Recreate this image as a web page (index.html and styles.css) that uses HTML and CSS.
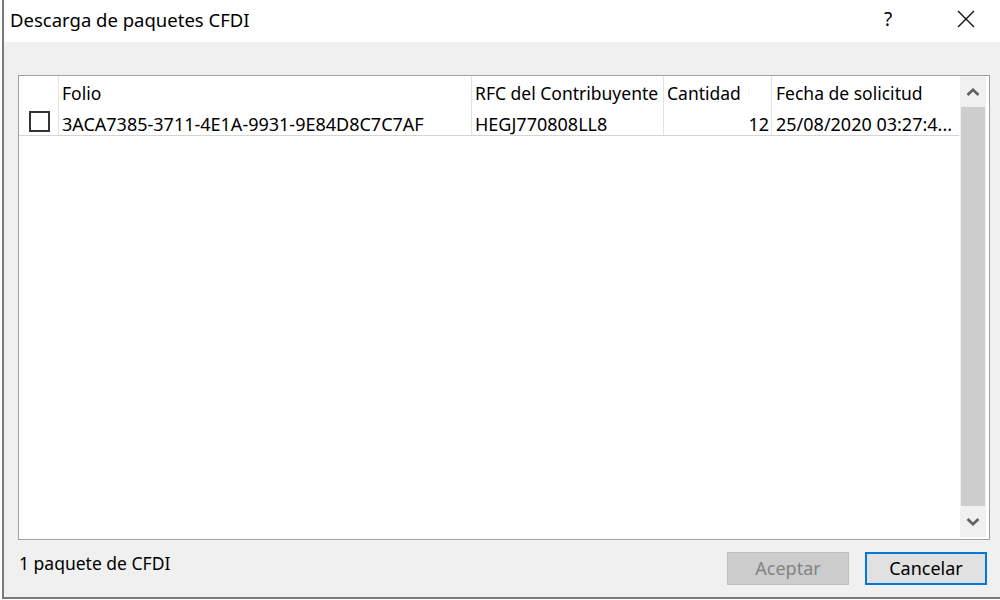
FILE: index.html
```html
<!DOCTYPE html>
<html lang="es">
<head>
<meta charset="utf-8">
<title>Descarga de paquetes CFDI</title>
<link rel="stylesheet" href="styles.css">
</head>
<body>
<div class="window">
  <div class="titlebar">
    <div class="title">Descarga de paquetes CFDI</div>
    <div class="help">?</div>
    <div class="close">
      <svg width="18" height="18" viewBox="0 0 18 18"><path d="M1 1 L17 17 M17 1 L1 17" stroke="#111" stroke-width="1.4" fill="none"/></svg>
    </div>
  </div>
  <div class="content">
    <div class="listbox">
      <div class="grid">
        <div class="row head">
          <div class="cell c-check"></div>
          <div class="cell c-folio">Folio</div>
          <div class="cell c-rfc">RFC del Contribuyente</div>
          <div class="cell c-cant">Cantidad</div>
          <div class="cell c-fecha">Fecha de solicitud</div>
        </div>
        <div class="row item">
          <div class="cell c-check"><span class="checkbox"></span></div>
          <div class="cell c-folio">3ACA7385-3711-4E1A-9931-9E84D8C7C7AF</div>
          <div class="cell c-rfc">HEGJ770808LL8</div>
          <div class="cell c-cant num">12</div>
          <div class="cell c-fecha">25/08/2020 03:27:4...</div>
        </div>
      </div>
      <div class="scrollbar">
        <div class="arrow">
          <svg width="14" height="10" viewBox="0 0 14 10"><path d="M1.5 8 L7 2.8 L12.5 8" stroke="#606060" stroke-width="2.6" fill="none"/></svg>
        </div>
        <div class="thumb"></div>
        <div class="arrow">
          <svg width="14" height="10" viewBox="0 0 14 10"><path d="M1.5 2 L7 7.2 L12.5 2" stroke="#606060" stroke-width="2.6" fill="none"/></svg>
        </div>
      </div>
    </div>
    <div class="footer">
      <div class="status">1 paquete de CFDI</div>
      <div class="buttons">
        <button class="btn disabled" disabled>Aceptar</button>
        <button class="btn primary">Cancelar</button>
      </div>
    </div>
  </div>
</div>
</body>
</html>
```
FILE: styles.css
```css
html, body {
  margin: 0;
  padding: 0;
  background: #ffffff;
}
body {
  font-family: "Noto Sans", "Liberation Sans", sans-serif;
  font-size: 18px;
  color: #000;
}
.window {
  margin-left: 2px;
  width: 998px;
  height: 599px;
  box-sizing: border-box;
  border-left: 2px solid #7a7a7a;
  border-bottom: 2px solid #7a7a7a;
  display: flex;
  flex-direction: column;
  background: #f0f0f0;
}
.titlebar {
  height: 42px;
  background: #ffffff;
  display: flex;
  align-items: center;
  flex-shrink: 0;
}
.title {
  flex: 1;
  padding-left: 6px;
  padding-bottom: 3px;
  font-size: 18.5px;
  color: #000;
}
.help {
  width: 20px;
  text-align: center;
  font-size: 19px;
  margin-right: 59px;
  padding-bottom: 4px;
}
.close {
  width: 18px;
  height: 18px;
  margin-right: 25px;
  margin-bottom: 4px;
}
.close svg { display: block; }
.content {
  flex: 1;
  display: flex;
  flex-direction: column;
  padding: 33px 10px 0 14px;
}
.listbox {
  height: 465px;
  box-sizing: border-box;
  border: 1px solid #a0a0a0;
  background: #ffffff;
  display: flex;
  flex-shrink: 0;
}
.grid {
  width: 940px;
  flex-shrink: 0;
}
.row {
  display: flex;
}
.row.head {
  height: 31px;
  font-size: 17.5px;
}
.row.item {
  height: 29px;
  border-bottom: 1px solid #d4d4d4;
  box-sizing: border-box;
}
.cell {
  box-sizing: border-box;
  padding-left: 3px;
  white-space: nowrap;
  overflow: hidden;
  border-right: 1px solid #e3e3e3;
  display: flex;
  align-items: center;
}
.row.head .cell {
  padding-top: 3px;
}
.row.item .cell {
  padding-top: 6px;
}
.row.item .c-check {
  padding-top: 4px;
  align-items: flex-start;
}
.c-check { width: 40px; justify-content: center; padding-left: 2px; }
.c-folio { width: 413px; }
.c-rfc { width: 192px; }
.c-cant { width: 108px; }
.c-fecha { width: 187px; border-right: none; padding-left: 4px; }
.num { justify-content: flex-end; padding-right: 2px; }
.checkbox {
  display: block;
  width: 21px;
  height: 21px;
  box-sizing: border-box;
  border: 2px solid #333333;
  background: #fff;
}
.scrollbar {
  width: 26px;
  margin-left: 1px;
  margin-bottom: 2px;
  background: #f0f0f0;
  display: flex;
  flex-direction: column;
}
.arrow {
  height: 31px;
  display: flex;
  align-items: center;
  justify-content: center;
  flex-shrink: 0;
}
.arrow svg { display: block; }
.thumb {
  flex: 1;
  margin: 0 1px;
  background: #cdcdcd;
}
.footer {
  display: flex;
  align-items: flex-start;
  justify-content: space-between;
  margin-top: 12px;
  margin-right: 3px;
  height: 33px;
}
.status {
  font-size: 17.5px;
  line-height: 22px;
  padding-left: 1px;
  padding-top: 0px;
}
.buttons {
  display: flex;
  gap: 16px;
}
.btn {
  width: 122px;
  height: 33px;
  box-sizing: border-box;
  font-family: "Noto Sans", "Liberation Sans", sans-serif;
  font-size: 18px;
  padding: 0 0 2px 0;
}
.btn.disabled {
  background: #cccccc;
  border: 1px solid #bfbfbf;
  color: #838383;
}
.btn.primary {
  background: #e1e1e1;
  border: 2px solid #0078d7;
  color: #000;
}
```
